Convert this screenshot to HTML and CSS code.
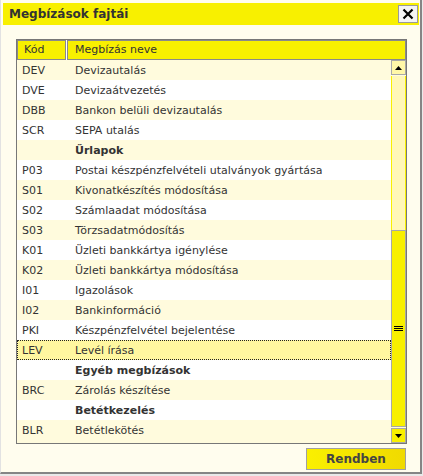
FILE: index.html
```html
<!DOCTYPE html>
<html lang="hu">
<head>
<meta charset="utf-8">
<title>Megbízások fajtái</title>
<link rel="stylesheet" href="styles.css">
</head>
<body>
<div class="window">
  <div class="titlebar">
    <span class="title">Megbízások fajtái</span>
    <button class="close" aria-label="Bezárás">
      <svg width="12" height="12" viewBox="0 0 12 12"><path d="M1.5 1.5 L10.5 10.5 M10.5 1.5 L1.5 10.5" stroke="#000" stroke-width="2.2" fill="none"/></svg>
    </button>
  </div>
  <div class="list">
    <div class="list-head">
      <div class="hcell hcode">Kód</div>
      <div class="hcell hname">Megbízás neve</div>
    </div>
    <div class="list-body">
      <div class="rows">
        <div class="row"><span class="code">DEV</span><span class="name">Devizautalás</span></div>
        <div class="row"><span class="code">DVE</span><span class="name">Devizaátvezetés</span></div>
        <div class="row"><span class="code">DBB</span><span class="name">Bankon belüli devizautalás</span></div>
        <div class="row"><span class="code">SCR</span><span class="name">SEPA utalás</span></div>
        <div class="row group"><span class="code"></span><span class="name">Űrlapok</span></div>
        <div class="row"><span class="code">P03</span><span class="name">Postai készpénzfelvételi utalványok gyártása</span></div>
        <div class="row"><span class="code">S01</span><span class="name">Kivonatkészítés módosítása</span></div>
        <div class="row"><span class="code">S02</span><span class="name">Számlaadat módosítása</span></div>
        <div class="row"><span class="code">S03</span><span class="name">Törzsadatmódosítás</span></div>
        <div class="row"><span class="code">K01</span><span class="name">Üzleti bankkártya igénylése</span></div>
        <div class="row"><span class="code">K02</span><span class="name">Üzleti bankkártya módosítása</span></div>
        <div class="row"><span class="code">I01</span><span class="name">Igazolások</span></div>
        <div class="row"><span class="code">I02</span><span class="name">Bankinformáció</span></div>
        <div class="row"><span class="code">PKI</span><span class="name">Készpénzfelvétel bejelentése</span></div>
        <div class="row selected"><span class="code">LEV</span><span class="name">Levél írása</span></div>
        <div class="row group"><span class="code"></span><span class="name">Egyéb megbízások</span></div>
        <div class="row"><span class="code">BRC</span><span class="name">Zárolás készítése</span></div>
        <div class="row group"><span class="code"></span><span class="name">Betétkezelés</span></div>
        <div class="row"><span class="code">BLR</span><span class="name">Betétlekötés</span></div>
      </div>
      <div class="scrollbar">
        <div class="sbtn up"><svg width="7" height="4" viewBox="0 0 7 4"><path d="M3.5 0 L7 4 L0 4 Z" fill="#000"/></svg></div>
        <div class="track">
          <div class="thumb"><svg width="9" height="5" viewBox="0 0 9 5"><path d="M0 0.5H9M0 2.5H9M0 4.5H9" stroke="#000" stroke-width="1"/></svg></div>
        </div>
        <div class="sbtn down"><svg width="7" height="4" viewBox="0 0 7 4"><path d="M0 0 L7 0 L3.5 4 Z" fill="#000"/></svg></div>
      </div>
    </div>
  </div>
  <div class="footer">
    <button class="ok">Rendben</button>
  </div>
</div>
</body>
</html>
```

FILE: styles.css
```css
html, body {
  margin: 0;
  padding: 0;
}
body {
  background: #e9e9e9;
  width: 423px;
  height: 476px;
  font-family: "DejaVu Sans", Verdana, sans-serif;
  color: #333;
}
.window {
  box-sizing: border-box;
  width: 422px;
  height: 474px;
  background: #fffdee;
  border-left: 1px solid #e2e2e2;
  border-right: 2px solid #858585;
  border-bottom: 2px solid #858585;
  padding: 3px 1px 0 2px;
  display: flex;
  flex-direction: column;
}
.titlebar {
  height: 22px;
  background: #f8f000;
  display: flex;
  align-items: center;
  justify-content: space-between;
  padding: 0 1px 0 6px;
}
.title {
  font-weight: bold;
  font-size: 12px;
  color: #333;
}
.close {
  box-sizing: border-box;
  width: 20px;
  height: 18px;
  margin: 0;
  padding: 0;
  background: #f4f4f4;
  border: 1px solid #9a9a9a;
  display: flex;
  align-items: center;
  justify-content: center;
}
.list {
  box-sizing: border-box;
  margin: 14px 12px 0 13px;
  height: 405px;
  border: 1px solid #777;
  display: flex;
  flex-direction: column;
  background: #fffbdd;
}
.list-head {
  display: flex;
  height: 20px;
  background: #fff;
  gap: 1px;
}
.hcell {
  box-sizing: border-box;
  height: 20px;
  background: #f8f000;
  border: 1px solid #8a8a8a;
  font-size: 11px;
  line-height: 18px;
  color: #333;
}
.hcode {
  width: 49px;
  padding-left: 6px;
}
.hname {
  flex: 1;
  padding-left: 7px;
}
.list-body {
  flex: 1;
  display: flex;
  min-height: 0;
}
.rows {
  flex: 1;
  overflow: hidden;
}
.row {
  box-sizing: border-box;
  height: 20px;
  display: flex;
  align-items: center;
  font-size: 11px;
  color: #333;
  background: #fffbdd;
}
.row:nth-child(even) {
  background: #fff;
}
.row.group .name {
  font-weight: bold;
}
.row.selected {
  background: #fff7a0;
  border: 1px dotted #222;
}
.code {
  width: 53px;
  padding-left: 5px;
  flex: none;
}
.row.selected .code {
  padding-left: 4px;
}
.name {
  white-space: nowrap;
}
.scrollbar {
  width: 15px;
  display: flex;
  flex-direction: column;
  flex: none;
}
.sbtn {
  box-sizing: border-box;
  height: 15px;
  border: 1px solid #a8a8a8;
  display: flex;
  align-items: center;
  justify-content: center;
  flex: none;
}
.sbtn.up {
  background: #fff7a8;
}
.sbtn.down {
  background: #f8f000;
}
.track {
  flex: 1;
  box-sizing: border-box;
  background: #fff7b8;
  border-left: 1px solid #f8f000;
  border-right: 1px solid #f8f000;
  display: flex;
  flex-direction: column;
  justify-content: flex-end;
  margin: 1px 0;
}
.thumb {
  box-sizing: border-box;
  height: 197px;
  margin: 0 -1px;
  background: #f8f000;
  border: 1px solid #a8a8a8;
  display: flex;
  align-items: center;
  justify-content: center;
}
.footer {
  display: flex;
  justify-content: flex-end;
  padding: 4px 13px 0 0;
}
.ok {
  box-sizing: border-box;
  width: 100px;
  height: 22px;
  margin: 0;
  background: linear-gradient(to right, #faf000, #f0da00);
  border: 1px solid #a0a0a0;
  font-family: "DejaVu Sans", Verdana, sans-serif;
  font-weight: bold;
  font-size: 12px;
  color: #444;
  padding: 0;
}
```
